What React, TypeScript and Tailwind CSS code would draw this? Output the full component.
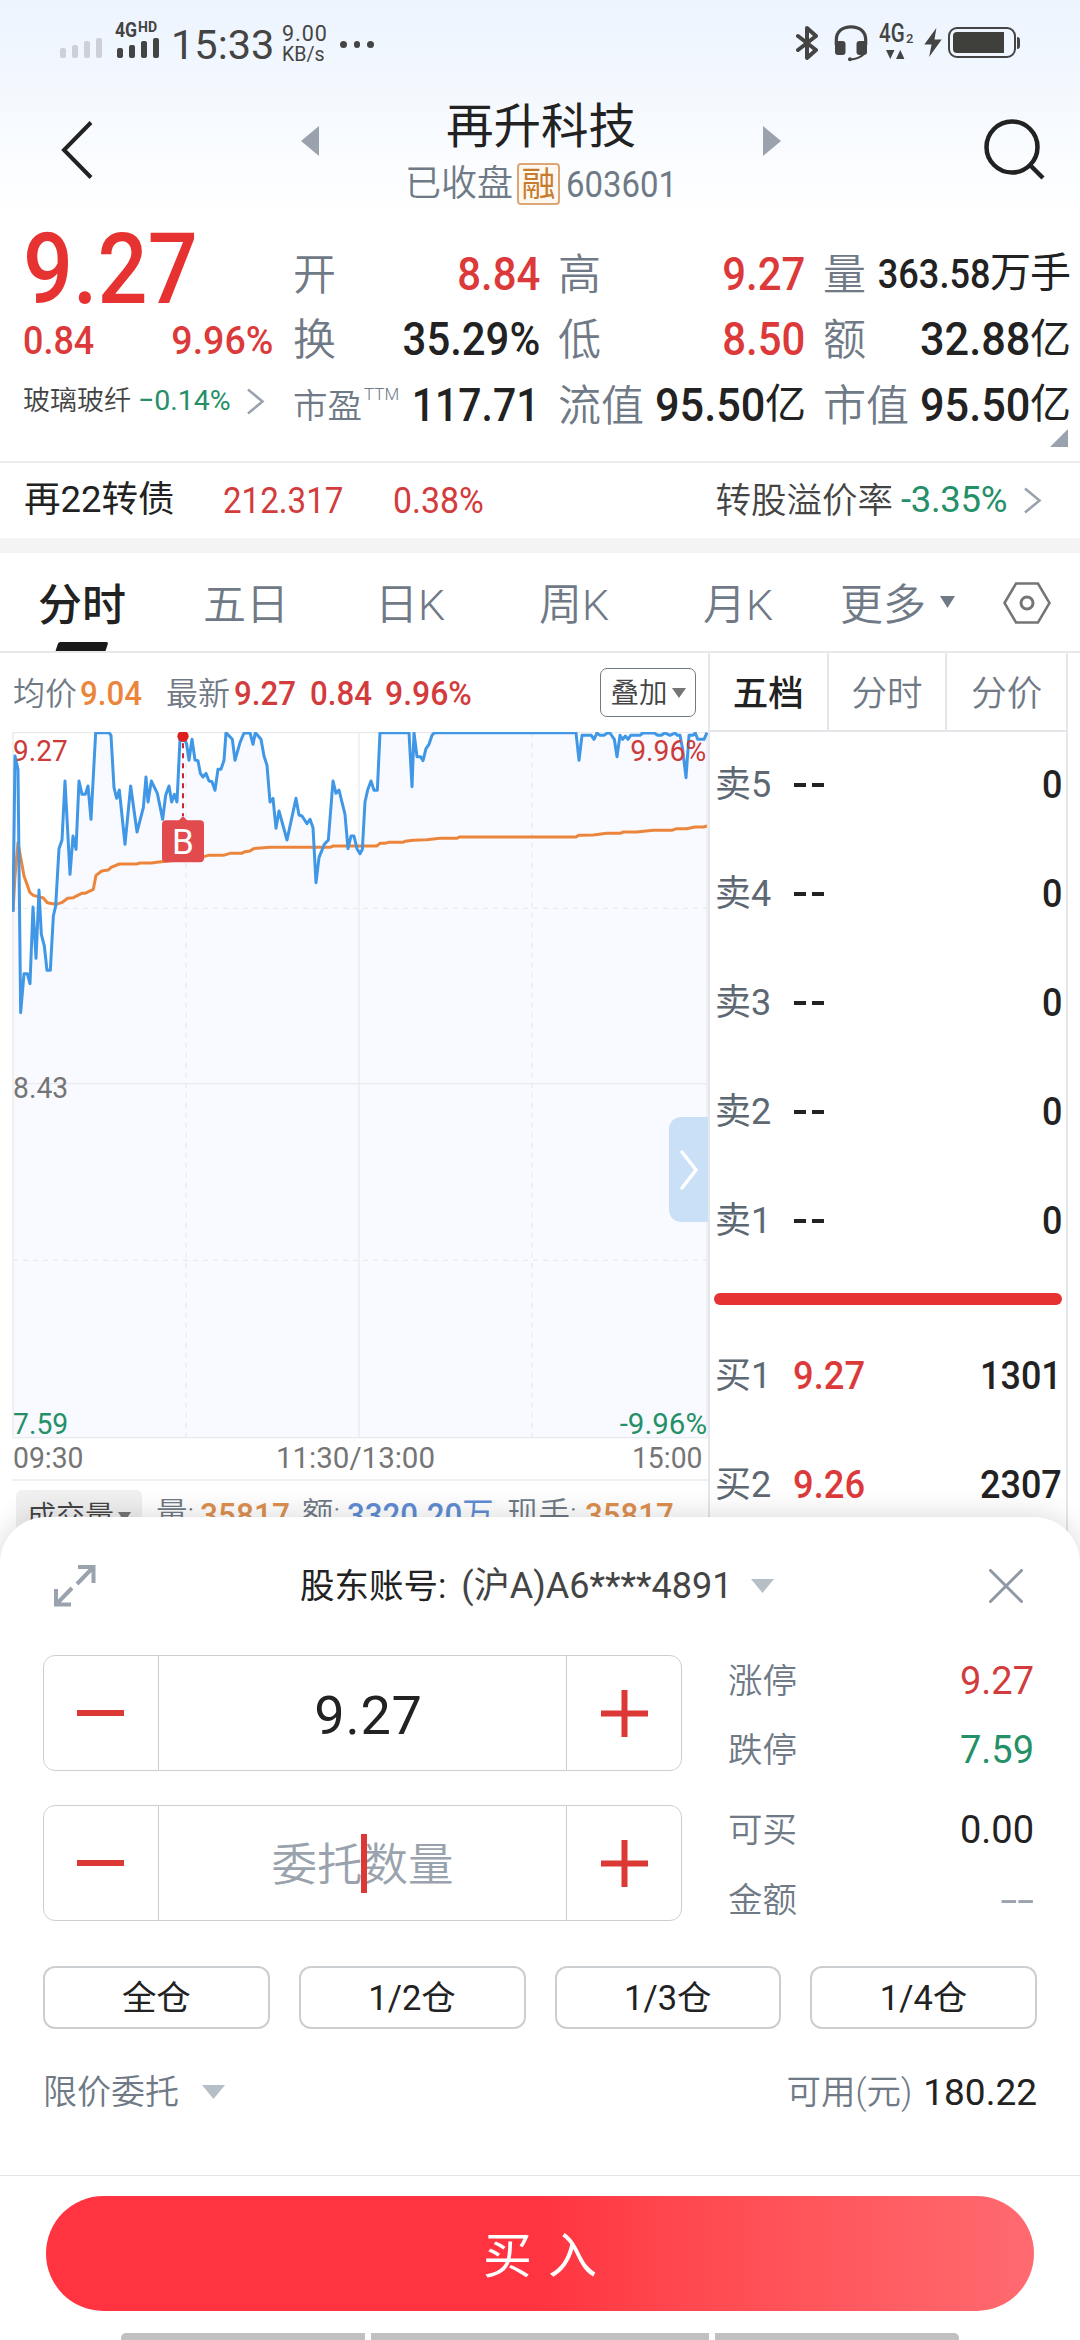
import { useState } from "react";
import clsx from "clsx";

interface Quote {
  label: string;
  value: string;
  unit?: string;
  up?: boolean;
  ttm?: boolean;
  small?: boolean;
}

const quotes: Quote[] = [
  { label: "开", value: "8.84", up: true },
  { label: "高", value: "9.27", up: true },
  { label: "量", value: "363.58", unit: "万手", small: true },
  { label: "换", value: "35.29%" },
  { label: "低", value: "8.50", up: true },
  { label: "额", value: "32.88", unit: "亿" },
  { label: "市盈", value: "117.71", ttm: true },
  { label: "流值", value: "95.50", unit: "亿" },
  { label: "市值", value: "95.50", unit: "亿" },
];

const sells = ["卖5", "卖4", "卖3", "卖2", "卖1"];
const buys = [
  { label: "买1", price: "9.27", qty: "1301" },
  { label: "买2", price: "9.26", qty: "2307" },
];

// intraday price, 3 units per pixel
const PRICE =
  "39,577 45,110 54,150 62,880 72,763 82,763 90,793 99,563 108,717 117,512 124,645 133,680 141,753 151,753 160,590 167,560 177,388 186,362 195,185 210,465 219,350 228,390 237,185 246,225 256,225 264,200 273,300 287,40 327,40 333,48 342,205 350,237 358,212 375,375 392,200 411,338 430,265 438,173 444,248 454,185 472,222 488,300 497,228 507,200 515,248 523,225 531,248 540,60 549,45 560,75 567,123 576,60 585,122 594,124 601,162 609,173 618,162 627,185 636,187 645,213 654,150 663,150 672,123 678,40 697,60 705,123 720,70 732,41 750,40 759,75 766,40 783,60 792,110 801,138 810,248 819,237 828,327 837,275 861,362 888,237 897,287 906,290 921,313 930,300 939,325 948,490 957,415 973,375 985,362 999,185 1008,222 1017,212 1035,285 1044,388 1053,350 1062,350 1071,388 1080,403 1087,390 1095,248 1103,212 1113,185 1122,213 1132,213 1140,40 1227,40 1236,202 1242,40 1251,112 1262,112 1269,124 1278,88 1287,75 1296,48 1303,40 1728,40 1737,123 1746,48 1774,48 1782,60 1791,41 1800,48 1812,48 1822,41 1830,41 1843,60 1851,112 1860,48 1868,60 1876,50 1884,60 1892,48 1920,48 1928,41 1963,41 1973,48 1983,48 1995,41 2010,48 2025,41 2032,48 2040,48 2048,90 2058,175 2067,48 2078,48 2086,41 2093,60 2112,60 2121,40";

const AVERAGE =
  "39,577 45,470 54,370 63,420 72,470 90,520 100,528 130,536 142,550 167,555 185,550 203,537 220,535 245,522 255,522 280,510 288,468 305,455 325,452 333,444 358,434 410,434 420,431 455,431 470,429 600,415 625,408 670,408 690,402 725,402 735,397 750,395 760,388 810,384 990,384 1000,380 1130,380 1140,372 1155,372 1165,369 1208,369 1215,366 1240,363 1280,361 1320,357 1370,357 1378,353 1728,353 1736,348 1780,347 1820,342 1860,342 1870,338 1910,338 1960,333 2015,333 2030,328 2060,328 2085,323 2110,323 2121,320";

function Signal({ className }: { className: string }) {
  return (
    <div className={clsx("flex items-end gap-[6px]", className)}>
      <i className="h-[10px] w-[6px] rounded-[2px] bg-current" />
      <i className="h-[13px] w-[6px] rounded-[2px] bg-current" />
      <i className="h-[17px] w-[6px] rounded-[2px] bg-current" />
      <i className="h-[20px] w-[6px] rounded-[2px] bg-current" />
    </div>
  );
}

function Down({ className }: { className: string }) {
  return (
    <svg viewBox="0 0 16 12" preserveAspectRatio="none" className={className} fill="currentColor">
      <path d="M0 0H16L8 12Z" />
    </svg>
  );
}

function Chevron({ className }: { className?: string }) {
  return (
    <svg viewBox="0 0 19 27" className={clsx("h-[27px] w-[19px]", className)} fill="none" stroke="#9aa3ad" strokeWidth="2.6">
      <path d="M2 1.5L16.5 13.5L2 25.5" />
    </svg>
  );
}

function StatusBar() {
  return (
    <div className="flex h-[84px] items-start text-[#444]">
      <Signal className="mt-[38px] ml-[60px] text-[#cdd0d8]" />
      <div className="ml-[13px] mt-[21px] w-[48px]">
        <div className="flex h-[17px] items-start font-bold leading-none">
          <span className="origin-left scale-x-[0.88] text-[20px] leading-[18px]">4G</span>
          <span className="-ml-[2px] text-[14px] leading-[13px]">HD</span>
        </div>
        <Signal className="ml-[2px]" />
      </div>
      <div className="ml-[8px] mt-[24px] w-[108px] text-[41.5px] leading-[42px]">15:33</div>
      <div className="ml-[3px] mt-[23px] w-[58px] text-[21.5px] leading-[21px]">
        <div className="tracking-[1px]">9.00</div>
        <div className="text-[19.5px]">KB/s</div>
      </div>
      <div className="mt-[41px] flex gap-[7px]">
        <i className="size-[6.5px] rounded-full bg-current" />
        <i className="size-[6.5px] rounded-full bg-current" />
        <i className="size-[6.5px] rounded-full bg-current" />
      </div>
      <svg viewBox="0 0 22 36" className="mt-[25px] ml-auto h-[36px] w-[22px]" fill="none" stroke="currentColor" strokeWidth="4" strokeLinecap="round" strokeLinejoin="round">
        <path d="M2 11L20 25L11 33V3L20 11L2 25" />
      </svg>
      <svg viewBox="0 0 34 37" className="mt-[25px] ml-[16px] h-[37px] w-[34px]" fill="none" stroke="currentColor">
        <path d="M2.3 20V15C2.3 6 9 1.8 17 1.8S31.7 6 31.7 15V20" strokeWidth="3.2" />
        <path d="M30 29Q25 34 16 34.5" strokeWidth="2" />
        <rect x="1" y="16" width="10.5" height="14" rx="3" fill="currentColor" stroke="none" />
        <rect x="22.5" y="16" width="10.5" height="14" rx="3" fill="currentColor" stroke="none" />
        <circle cx="16" cy="34.3" r="2" fill="currentColor" stroke="none" />
      </svg>
      <div className="ml-[11px] mt-[25px] w-[36px]">
        <div className="flex h-[21px] items-end font-medium leading-none">
          <span className="w-[27px] origin-left scale-x-[0.82] text-[25px] leading-[24px]">4G</span>
          <span className="text-[13px] leading-[14px]">2</span>
        </div>
        <div className="mt-[4px] ml-[7px] flex gap-px">
          <Down className="h-[9px] w-[8.5px]" />
          <Down className="h-[9px] w-[8.5px] rotate-180" />
        </div>
      </div>
      <svg viewBox="0 0 18 30" className="mt-[28px] ml-[9px] h-[29px] w-[18px]" fill="currentColor">
        <path d="M12.5 0L0 17H7.5L5 30L18 12H10.5Z" />
      </svg>
      <div className="ml-[6px] mt-[27px] flex items-center">
        <div className="h-[31px] w-[68px] rounded-[9px] border-2 border-current p-[3px]">
          <div className="h-full w-[51px] rounded-l-[4px] bg-[#3f3f3b]" />
        </div>
        <i className="ml-px h-[12px] w-[3px] rounded-r-[3px] bg-current" />
      </div>
      <div className="w-[60px]" />
    </div>
  );
}

function Header() {
  return (
    <div className="flex h-[131px] items-start">
      <svg viewBox="0 0 32 58" className="mt-[37px] ml-[61px] h-[58px] w-[32px]" fill="none" stroke="#222" strokeWidth="4">
        <path d="M30 1.5L3 29L30 56.5" />
      </svg>
      <Down className="mt-[48px] ml-[202px] h-[18px] w-[30px] rotate-90 text-[#9aa3ad]" />
      <div className="ml-[23px] flex w-[386px] flex-col items-center">
        <div className="mt-[16px] font-[370] text-[47.5px] leading-[54px] text-[#222]">再升科技</div>
        <div className="mt-[7px] flex h-[46px] items-center text-[36px] leading-none text-[#6f7a86]">
          <span className="font-[350]">已收盘</span>
          <span className="ml-[4px] flex h-[42px] w-[43px] items-center justify-center rounded-[4px] border-2 border-[#dca677] bg-[#fff8f0] text-[34px] leading-none text-[#c67c2e]">
            融
          </span>
          <span className="ml-[6px] w-[111px] origin-left scale-x-[0.89] text-[37px]">603601</span>
        </div>
      </div>
      <Down className="mt-[48px] ml-[23px] h-[18px] w-[30px] -rotate-90 text-[#9aa3ad]" />
      <svg viewBox="0 0 62 62" className="mt-[34px] ml-[197px] h-[62px] w-[62px]" fill="none" stroke="#222" strokeWidth="4.5">
        <circle cx="28" cy="29" r="25.5" />
        <path d="M46 47L59 60" />
      </svg>
    </div>
  );
}

function QuoteCell({ q }: { q: Quote }) {
  return (
    <div className="flex h-[65.5px] items-center leading-none">
      <span className={clsx("mt-[3px] font-[350] whitespace-nowrap text-[#6f7a86]", q.ttm ? "text-[34.5px]" : "text-[43px]")}>{q.label}</span>
      {q.ttm && <span className="mb-[20px] ml-[2px] text-[17px] font-light text-[#6f7a86]">TTM</span>}
      <span className="flex-1" />
      <span className={clsx("flex w-0 items-center justify-end", q.up ? "text-[#dc3a3a]" : "text-[#222]")}>
        <span
          className={clsx(
            "origin-right font-medium",
            q.small ? "scale-x-[0.87] text-[41.5px]" : "text-[46px]",
            !q.small && (q.unit ? "scale-x-[0.94]" : q.ttm ? "scale-x-[0.89]" : "scale-x-[0.91]")
          )}
        >
          {q.value}
        </span>
        {q.unit && <span className="whitespace-nowrap text-[41px] tracking-[-1px]">{q.unit}</span>}
      </span>
    </div>
  );
}

function QuotePanel() {
  return (
    <div className="relative flex h-[248px] border-b-2 border-[#ececec]">
      <div className="ml-[23px] w-[250px]">
        <div className="mt-[5px] h-[96px] origin-left scale-x-[0.89] text-[99px] leading-[98px] font-medium text-[#e63331]">9.27</div>
        <div className="flex h-[48px] items-center justify-between pt-[2px] leading-none font-medium text-[#dc3a3a]">
          <span className="origin-left scale-x-[0.91] text-[39.5px]">0.84</span>
          <span className="origin-right scale-x-[0.95] text-[39.5px]">9.96%</span>
        </div>
        <div className="mt-[13px] flex h-[48px] items-center leading-none">
          <span className="w-[115px] font-[350] whitespace-nowrap text-[27px] text-[#444]">玻璃玻纤</span>
          <span className="w-[108px] whitespace-nowrap text-[28.5px] text-[#259068]">−0.14%</span>
          <Chevron />
        </div>
      </div>
      <div className="mt-[26px] ml-[20px] grid w-[777px] grid-cols-[247px_247px_247px] content-start gap-x-[18px]">
        {quotes.map((q) => (
          <QuoteCell key={q.label} q={q} />
        ))}
      </div>
      <svg viewBox="0 0 18 18" className="absolute right-[12px] bottom-[14px] size-[18px]" fill="#9aa3ad">
        <path d="M18 0V18H0Z" />
      </svg>
    </div>
  );
}

function BondRow() {
  return (
    <div className="flex h-[75px] items-center leading-none">
      <span className="ml-[24px] w-[199px] font-[370] text-[36.5px] text-[#222]">再22转债</span>
      <span className="w-[170px] origin-left scale-x-[0.92] text-[36px] text-[#d23c3c]">212.317</span>
      <span className="origin-left scale-x-[0.94] text-[36px] text-[#d23c3c]">0.38%</span>
      <span className="mt-[3px] ml-auto font-[350] text-[35.5px] text-[#444]">转股溢价率</span>
      <span className="ml-[8px] w-[122px] origin-left whitespace-nowrap text-[36.5px] text-[#259068] tracking-[-0.3px]">-3.35%</span>
      <Chevron className="mr-[38px]" />
    </div>
  );
}

function PeriodTabs({ active, onChange }: { active: string; onChange: (t: string) => void }) {
  return (
    <div className="flex h-[100px] items-center border-b-2 border-[#e8e8e8] text-[43px] leading-none font-[350] text-[#6f7a86]">
      {["分时", "五日", "日K", "周K", "月K"].map((t) => (
        <button
          key={t}
          onClick={() => onChange(t)}
          className={clsx("flex h-full w-[164px] flex-col items-center leading-none", t === active && "font-[450] text-[44px] text-[#222]")}
        >
          <span className="mt-[31px] h-[59px]">{t}</span>
          {t === active && <i className="h-[9px] w-[50px] -skew-x-[18deg] rounded-t-[2px] bg-[#1a1a1a]" />}
        </button>
      ))}
      <span className="mt-[7px] ml-[20px] whitespace-nowrap">更多</span>
      <Down className="ml-[14px] h-[12px] w-[15px]" />
      <svg viewBox="0 0 48 42" className="mt-[1px] ml-[48px] h-[42px] w-[48px]" fill="none" stroke="#757575" strokeWidth="2.5">
        <path d="M1.5 21L13 1.5H35L46.5 21L35 40.5H13Z" />
        <circle cx="24" cy="21" r="6" strokeWidth="3" />
      </svg>
    </div>
  );
}

function Chart() {
  return (
    <div className="relative ml-[12px] h-[707px]">
      <svg viewBox="36 38 2088 2121" className="h-[707px] w-[696px]" fill="none">
        <polygon points={`39,2157 ${PRICE} 2121,2157`} fill="#f9faff" />
        <g stroke="#e9eaee" strokeWidth="4">
          <path d="M39 40H2121V2155H39ZM1077 40V2155M39 1093H2121" />
          <path d="M558 40V2155M1596 40V2155M39 567H2121M39 1623H2121" strokeDasharray="15 15" />
        </g>
        <polyline points={AVERAGE} stroke="#ec853c" strokeWidth="9" strokeLinejoin="round" />
        <polyline points={PRICE} stroke="#4097e6" strokeWidth="9" strokeLinejoin="round" />
        <path d="M549 72V290" stroke="#cf2430" strokeWidth="6" strokeDasharray="15 15" />
        <circle cx="549" cy="51" r="17" fill="#dc2020" />
        <path d="M534 306L549 290L564 306Z" fill="#e24b4d" />
        <rect x="486" y="303" width="126" height="126" rx="12" fill="#e24b4d" />
      </svg>
      <span className="absolute top-[90px] left-[150px] w-[42px] text-center text-[35px] leading-[42px] text-white">B</span>
      <span className="absolute top-[2px] left-[1px] origin-left scale-x-[0.95] text-[29.5px] leading-[34px] text-[#cc3a3a]">9.27</span>
      <span className="absolute top-[2px] right-[2px] origin-right scale-x-[0.96] text-[29.5px] leading-[34px] text-[#cc3a3a]">9.96%</span>
      <span className="absolute top-[339px] left-[1px] origin-left scale-x-[0.96] text-[29.5px] leading-[34px] text-[#757575]">8.43</span>
      <span className="absolute top-[675px] left-[1px] origin-left scale-x-[0.96] text-[29.5px] leading-[34px] text-[#259068]">7.59</span>
      <span className="absolute top-[675px] right-[1px] text-[29.5px] leading-[34px] text-[#259068]">-9.96%</span>
      <button className="absolute top-[385px] right-0 flex h-[105px] w-[39px] items-center justify-center rounded-l-[12px] bg-[#c9e0f7]">
        <svg viewBox="0 0 18 40" className="h-[40px] w-[18px]" fill="none" stroke="white" strokeWidth="3.5" strokeLinecap="round">
          <path d="M2 2L16 20L2 38" />
        </svg>
      </button>
    </div>
  );
}

function ChartColumn() {
  return (
    <div className="w-[708px]">
      <div className="flex h-[79px] items-center leading-none">
        <span className="mt-[2px] ml-[13px] w-[67px] font-[350] text-[32px] text-[#6f7a86]">均价</span>
        <span className="w-[86px] origin-left scale-x-[0.92] text-[34px] font-medium text-[#ec853c]">9.04</span>
        <span className="mt-[2px] w-[68px] font-[350] text-[32px] text-[#6f7a86]">最新</span>
        <span className="w-[76px] origin-left scale-x-[0.92] text-[34px] font-medium text-[#d23c3c]">9.27</span>
        <span className="w-[75px] origin-left scale-x-[0.92] text-[34px] font-medium text-[#d23c3c]">0.84</span>
        <span className="origin-left scale-x-[0.94] text-[34px] font-medium text-[#d23c3c]">9.96%</span>
        <button className="mr-[12px] ml-auto flex h-[49px] w-[96px] items-center justify-center rounded-[7px] border border-[#6f7a86] text-[28.5px] leading-none text-[#444]">
          <span className="mt-[3px] font-[350]">叠加</span>
          <Down className="ml-[4px] h-[10px] w-[14px] text-[#757575]" />
        </button>
      </div>
      <Chart />
      <div className="relative ml-[12px] flex h-[42px] items-center justify-between border-b-2 border-[#f0f0f0] pr-[6px] pl-px text-[29.5px] leading-none text-[#757575]">
        <span className="origin-left scale-x-[0.96]">09:30</span>
        <span className="-ml-[4px]">11:30/13:00</span>
        <span className="origin-right scale-x-[0.96]">15:00</span>
      </div>
      <div className="flex h-[80px] items-start pt-[9px] leading-[50px]">
        <span className="ml-[16px] flex h-[54px] w-[126px] items-center justify-center rounded-[6px] bg-[#f0f0f0] font-[350] text-[29px] text-[#444]">
          成交量
          <Down className="ml-[4px] h-[10px] w-[13px] text-[#757575]" />
        </span>
        <span className="ml-[14px] w-[44px] font-[350] whitespace-nowrap text-[31.5px] text-[#6f7a86]">量:</span>
        <span className="w-[102px] origin-left scale-x-[0.93] text-[34px] font-medium text-[#dd9050]">35817</span>
        <span className="w-[45px] font-[350] whitespace-nowrap text-[31.5px] text-[#6f7a86]">额:</span>
        <span className="w-[160px] origin-left scale-x-[0.92] whitespace-nowrap text-[34px] text-[#5f8dd3]">
          <b className="font-medium">3320.20</b>万
        </span>
        <span className="w-[78px] font-[350] whitespace-nowrap text-[31.5px] text-[#6f7a86]">现手:</span>
        <span className="origin-left scale-x-[0.92] text-[34px] font-medium text-[#dd9050]">35817</span>
      </div>
    </div>
  );
}

function OrderBook() {
  const [tab, setTab] = useState("五档");

  return (
    <div className="w-[360px] border-x-2 border-[#e4e6e9]">
      <div className="grid h-[79px] grid-cols-3 divide-x-2 divide-[#e4e6e9] border-b-2 border-[#e4e6e9]">
        {["五档", "分时", "分价"].map((t) => (
          <button
            key={t}
            onClick={() => setTab(t)}
            className={clsx("pt-[6px] text-[35.5px] leading-none", t === tab ? "font-[480] text-[#222]" : "font-[350] text-[#6f7a86]")}
          >
            {t}
          </button>
        ))}
      </div>
      <div className="-mt-[1.5px]">
        {sells.map((s) => (
          <div key={s} className="flex h-[109px] items-center pr-[4px] pl-[5px] leading-none">
            <span className="w-[79px] font-[370] text-[36px] text-[#5d6873]">{s}</span>
            <span className="flex flex-1 gap-[6px]">
              <i className="h-[4px] w-[12px] bg-[#222]" />
              <i className="h-[4px] w-[12px] bg-[#222]" />
            </span>
            <span className="origin-right scale-x-[0.91] text-[39.5px] font-medium text-[#222]">0</span>
          </div>
        ))}
      </div>
      <div className="mx-[4px] mt-[17.5px] mb-[16px] h-[12px] rounded-full bg-[#e63331]" />
      {buys.map((b) => (
        <div key={b.label} className="flex h-[109px] items-center pr-[4px] pl-[5px] leading-none">
          <span className="w-[78px] font-[370] text-[36px] text-[#5d6873]">{b.label}</span>
          <span className="flex-1 origin-left scale-x-[0.92] text-[39.5px] font-medium text-[#dc3a3a]">{b.price}</span>
          <span className="origin-right scale-x-[0.91] text-[39.5px] font-medium text-[#222]">{b.qty}</span>
        </div>
      ))}
    </div>
  );
}

function Stepper({ value, placeholder, focused }: { value?: string; placeholder?: string; focused?: boolean }) {
  return (
    <div className="flex h-[116px] w-[639px] rounded-[12px] border border-[#cccfd2] leading-none">
      <button className="flex w-[115px] items-center justify-center border-r border-[#cccfd2]">
        <i className="-ml-[2px] h-[6px] w-[47px] bg-[#dc3835]" />
      </button>
      <div className="relative flex flex-1 items-center justify-center pt-[6px]">
        {value ? (
          <span className="ml-[12px] text-[54px] tracking-[0.8px] text-[#222]">{value}</span>
        ) : (
          <span className="font-[350] text-[45.5px] text-[#9aa3ad]">{placeholder}</span>
        )}
        {focused && <i className="absolute top-[28px] left-[202px] h-[59px] w-[6px] bg-[#dc3835]" />}
      </div>
      <button className="flex w-[115px] items-center justify-center border-l border-[#cccfd2]">
        <svg viewBox="0 0 47 47" className="size-[47px]" stroke="#dc3835" strokeWidth="6">
          <path d="M0 23.5H47M23.5 0V47" />
        </svg>
      </button>
    </div>
  );
}

function TradeSheet() {
  const limits = [
    { label: "涨停", value: "9.27", style: "mt-[7px]", color: "text-[#d23c3c]" },
    { label: "跌停", value: "7.59", style: "mt-[31px]", color: "text-[#259068]" },
    { label: "可买", value: "0.00", style: "mt-[42px]", color: "text-[#222]" },
    { label: "金额", value: "--", style: "mt-[32px]", color: "scale-x-[1.6] text-[#9aa3ad]" },
  ];

  return (
    <div className="absolute inset-x-0 bottom-0 flex h-[823px] flex-col overflow-hidden rounded-t-[46px] bg-white shadow-[0_0_30px_rgba(0,0,0,0.16)]">
      {/* 账号 */}
      <div className="flex h-[138px] items-center pr-[57px] pl-[54px] leading-none">
        <svg viewBox="0 0 42 42" className="size-[42px]" fill="none" stroke="#9aa3ad" strokeWidth="4">
          <path d="M24 2H39.5V18M39 2.5L23 19M2 24V39.5H17M2.5 39L18 23" />
        </svg>
        <span className="ml-[204px] font-[370] whitespace-nowrap text-[34.5px] text-[#222]">股东账号:</span>
        <span className="ml-[15px] font-[370] whitespace-nowrap text-[36px] text-[#444]">(沪A)A6****4891</span>
        <Down className="ml-[19px] h-[14px] w-[23px] text-[#b6bec6]" />
        <svg viewBox="0 0 34 34" className="ml-auto size-[34px]" fill="none" stroke="#8f99a3" strokeWidth="3" strokeLinecap="round">
          <path d="M1.5 1.5L32.5 32.5M32.5 1.5L1.5 32.5" />
        </svg>
      </div>

      <div className="flex pl-[43px]">
        <div className="space-y-[34px]">
          <Stepper value="9.27" />
          <Stepper placeholder="委托数量" focused />
        </div>
        <div className="ml-[46px] w-[306px]">
          {limits.map((l) => (
            <div key={l.label} className={clsx("flex h-[38px] items-center justify-between leading-none", l.style)}>
              <span className="font-[350] text-[34.5px] text-[#6f7a86]">{l.label}</span>
              <span className={clsx("origin-right font-[370] text-[38px]", l.color)}>{l.value}</span>
            </div>
          ))}
        </div>
      </div>

      {/* 仓位 */}
      <div className="mt-[45px] grid grid-cols-4 gap-[29px] px-[43px]">
        {["全仓", "1/2仓", "1/3仓", "1/4仓"].map((p) => (
          <button key={p} className="h-[63px] rounded-[12px] border-2 border-[#cccfd2] pt-[2px] font-[370] text-[34.5px] leading-none text-[#222]">
            {p}
          </button>
        ))}
      </div>

      <div className="mt-[42px] flex h-[42px] items-center px-[43px] leading-none">
        <span className="font-[350] text-[34px] text-[#6f7a86]">限价委托</span>
        <Down className="ml-[23px] h-[14px] w-[23px] text-[#b6bec6]" />
        <span className="ml-auto font-[350] text-[34.5px] text-[#6f7a86]">可用(元)</span>
        <span className="ml-[11px] text-[37px] text-[#222]">180.22</span>
      </div>

      <div className="mt-auto h-[165px] border-t border-[#e4e4e4]">
        <button className="mt-[20px] ml-[46px] flex h-[115px] w-[988px] items-center justify-center rounded-full bg-linear-to-r from-[#ff3440] from-50% to-[#ff6a70] pt-[6px] text-[49px] leading-none text-white">
          <span className="mr-[16px]">买</span>入
        </button>
        <div className="mt-[22px] ml-[121px] flex h-[7px] gap-[6px]">
          <i className="w-[244px] rounded-tl-[5px] bg-[#c0c0c0]" />
          <i className="w-[338px] bg-[#c0c0c0]" />
          <i className="w-[244px] rounded-tr-[5px] bg-[#c0c0c0]" />
        </div>
      </div>
    </div>
  );
}

export default function App() {
  const [period, setPeriod] = useState("分时");

  return (
    <div className="relative h-[2340px] w-[1080px] overflow-hidden bg-white font-['Roboto','Noto_Sans_CJK_SC',sans-serif]">
      <div className="bg-linear-to-b from-[#ecf4fe] to-white">
        <StatusBar />
        <Header />
      </div>
      <QuotePanel />
      <BondRow />
      <div className="h-[15px] bg-[#f4f4f4]" />
      <PeriodTabs active={period} onChange={setPeriod} />
      <div className="flex">
        <ChartColumn />
        <OrderBook />
      </div>
      <TradeSheet />
    </div>
  );
}
